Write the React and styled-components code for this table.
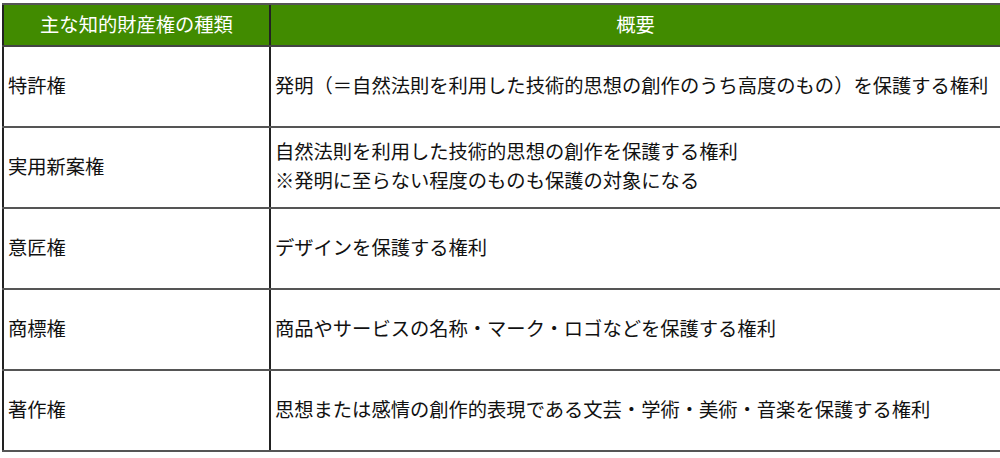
import React from "react";
import styled, { createGlobalStyle } from "styled-components";

const GlobalStyle = createGlobalStyle`
  html, body {
    margin: 0;
    padding: 0;
    background: #fff;
  }
  body {
    font-family: "Noto Sans CJK JP", "Noto Sans", sans-serif;
    color: #111;
  }
`;

const Page = styled.div`
  width: 1000px;
  height: 458px;
  padding: 3px 0 0 2px;
  box-sizing: border-box;
`;

const Table = styled.table`
  width: 994px;
  border-collapse: collapse;
  table-layout: fixed;
  font-size: 19.3px;
  border-left: 2px solid #333;
  border-right: 2px solid #333;
`;

const HeadCell = styled.th`
  height: 38px;
  padding: 0 0 2px;
  background: #418b00;
  color: #fff;
  font-weight: 400;
  text-align: center;
  border-top: 2px solid #555;
  border-bottom: 2px solid #444;
  border-left: 2px solid #222;
  width: ${(p) => p.w}px;
`;

const Cell = styled.td`
  height: 76px;
  padding: 0 0 3px 4px;
  border-bottom: 2px solid #555;
  border-left: 2px solid #222;
  vertical-align: middle;
  line-height: 29px;
  white-space: nowrap;
`;

const rows = [
  {
    name: "特許権",
    desc: ["発明（＝自然法則を利用した技術的思想の創作のうち高度のもの）を保護する権利"],
  },
  {
    name: "実用新案権",
    desc: [
      "自然法則を利用した技術的思想の創作を保護する権利",
      "※発明に至らない程度のものも保護の対象になる",
    ],
  },
  { name: "意匠権", desc: ["デザインを保護する権利"] },
  { name: "商標権", desc: ["商品やサービスの名称・マーク・ロゴなどを保護する権利"] },
  {
    name: "著作権",
    desc: ["思想または感情の創作的表現である文芸・学術・美術・音楽を保護する権利"],
  },
];

export default function App() {
  return (
    <>
      <GlobalStyle />
      <Page>
        <Table>
          <thead>
            <tr>
              <HeadCell w={265}>主な知的財産権の種類</HeadCell>
              <HeadCell w={729}>概要</HeadCell>
            </tr>
          </thead>
          <tbody>
            {rows.map((r) => (
              <tr key={r.name}>
                <Cell>{r.name}</Cell>
                <Cell>
                  {r.desc.map((d) => (
                    <div key={d}>{d}</div>
                  ))}
                </Cell>
              </tr>
            ))}
          </tbody>
        </Table>
      </Page>
    </>
  );
}
